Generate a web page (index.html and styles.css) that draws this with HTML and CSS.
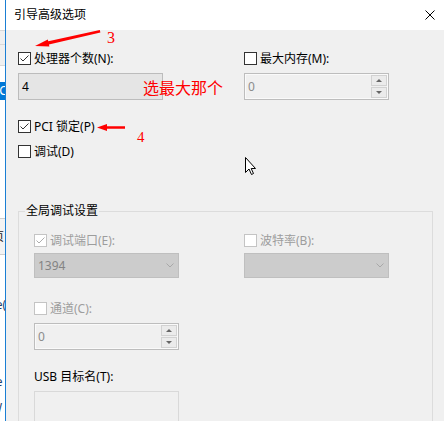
FILE: index.html
```html
<!DOCTYPE html>
<html lang="zh-CN">
<head>
<meta charset="utf-8">
<title>引导高级选项</title>
<link rel="stylesheet" href="styles.css">
</head>
<body>
<div class="screen">
  <div class="bgwin">
    <div class="seg h30"></div>
    <div class="seg line"></div>
    <div class="seg gray h13"></div>
    <div class="seg line"></div>
    <div class="seg gray h20"></div>
    <div class="seg line"></div>
    <div class="seg h16"></div>
    <div class="seg sel"><span class="frag">OC</span></div>
    <div class="seg h118"></div>
    <div class="seg box"><span class="frag dark">页</span></div>
    <div class="seg h37"></div>
    <div class="frow"><span class="frag">re(</span></div>
    <div class="frow"><span class="frag">N</span></div>
    <div class="frow"><span class="frag link">H</span></div>
    <div class="frow"><span class="frag">re</span></div>
    <div class="frow"><span class="frag">W</span></div>
  </div>

  <div class="dialog">
    <div class="titlebar">
      <span class="title">引导高级选项</span>
      <svg class="close" width="10" height="10" viewBox="0 0 10 10"><path d="M0.5 0.5 L9.5 9.5 M9.5 0.5 L0.5 9.5" stroke="#000" stroke-width="1" fill="none"/></svg>
    </div>

    <div class="content">
      <div class="two-col top">
        <div class="col">
          <div class="chk-row">
            <span class="cb"><svg width="11" height="11" viewBox="0 0 11 11"><path d="M1.5 5.5 L4 8 L9.5 2.5" stroke="#333" stroke-width="1" fill="none"/></svg></span>
            <span>处理器个数(N):</span>
          </div>
          <div class="field"><span>4</span></div>
        </div>
        <div class="col">
          <div class="chk-row">
            <span class="cb"></span>
            <span>最大内存(M):</span>
          </div>
          <div class="spinner">
            <span class="val">0</span>
            <span class="spin"><span class="sb up"><i></i></span><span class="sb down"><i></i></span></span>
          </div>
        </div>
      </div>

      <div class="chk-row pci">
        <span class="cb"><svg width="11" height="11" viewBox="0 0 11 11"><path d="M1.5 5.5 L4 8 L9.5 2.5" stroke="#333" stroke-width="1" fill="none"/></svg></span>
        <span>PCI 锁定(P)</span>
      </div>
      <div class="chk-row dbg">
        <span class="cb"></span>
        <span>调试(D)</span>
      </div>

      <div class="group">
        <div class="group-title">全局调试设置</div>
        <div class="two-col inner">
          <div class="col">
            <div class="chk-row disabled">
              <span class="cb"><svg width="11" height="11" viewBox="0 0 11 11"><path d="M1.5 5.5 L4 8 L9.5 2.5" stroke="#adadad" stroke-width="1" fill="none"/></svg></span>
              <span>调试端口(E):</span>
            </div>
            <div class="combo"><span>1394</span><svg width="8" height="5" viewBox="0 0 8 5"><path d="M0.5 0.5 L4 4 L7.5 0.5" stroke="#a8a8a8" stroke-width="1" fill="none"/></svg></div>
          </div>
          <div class="col">
            <div class="chk-row disabled">
              <span class="cb"></span>
              <span>波特率(B):</span>
            </div>
            <div class="combo"><span></span><svg width="8" height="5" viewBox="0 0 8 5"><path d="M0.5 0.5 L4 4 L7.5 0.5" stroke="#a8a8a8" stroke-width="1" fill="none"/></svg></div>
          </div>
        </div>

        <div class="col lower">
          <div class="chk-row disabled">
            <span class="cb"></span>
            <span>通道(C):</span>
          </div>
          <div class="spinner">
            <span class="val">0</span>
            <span class="spin"><span class="sb up"><i></i></span><span class="sb down"><i></i></span></span>
          </div>
          <div class="chk-row usb"><span>USB 目标名(T):</span></div>
          <div class="textbox"></div>
        </div>
      </div>
    </div>
  </div>

  <svg class="arrows" width="444" height="421" viewBox="0 0 444 421">
    <polygon points="35,46 47.8,39.4 48.3,41.3 99.8,30 100.4,32.4 48.9,44.4 49.4,46.6" fill="#f00"/>
    <polygon points="97,127.5 107,124 107,126.3 125,126.3 125,128.8 107,128.8 107,131" fill="#f00"/>
  </svg>
  <span class="note n3">3</span>
  <span class="note n4">4</span>
  <span class="note pick">选最大那个</span>
  <svg class="cursor" width="12" height="19" viewBox="0 0 12 19"><path d="M0.5 0.5 L0.5 15.5 L4 12 L6.5 17.5 L8.5 16.5 L6.2 11.5 L10.5 11.5 Z" fill="#fff" stroke="#000" stroke-width="1" stroke-linejoin="miter"/></svg>
</div>
</body>
</html>
```

FILE: styles.css
```css
* { box-sizing: border-box; }

html, body {
  margin: 0;
  width: 444px;
  height: 421px;
  overflow: hidden;
}

body {
  font-family: "Noto Sans", "Noto Sans CJK SC", sans-serif;
  font-size: 12px;
  color: #000;
  background: #f0f0f0;
}

.screen {
  position: relative;
  display: flex;
  width: 444px;
  height: 421px;
}

/* background window strip */
.bgwin {
  width: 5px;
  flex: none;
  display: flex;
  flex-direction: column;
  background: #fff;
  overflow: hidden;
}
.seg { flex: none; overflow: hidden; white-space: nowrap; }
.h30 { height: 30px; }
.h13 { height: 13px; }
.h20 { height: 20px; }
.h16 { height: 16px; }
.h118 { height: 118px; }
.h37 { height: 37px; }
.line { height: 1px; background: #d9d9d9; }
.gray { background: #f0f0f0; }
.sel {
  height: 18px;
  background: #0078d7;
  color: #fff;
  line-height: 18px;
}
.box {
  height: 37px;
  background: #f3f3f3;
  border-top: 1px solid #cfcfcf;
  border-bottom: 1px solid #cfcfcf;
  line-height: 35px;
}
.frow {
  height: 26px;
  line-height: 26px;
  overflow: hidden;
  white-space: nowrap;
}
.frag {
  display: inline-block;
  margin-left: -9px;
  font-size: 12px;
  color: #1c3f6e;
}
.frag.dark { color: #222; margin-left: -8px; }
.frag.link { color: #3a7bd5; }
.sel .frag { color: #fff; margin-left: -10px; }

/* dialog */
.dialog {
  flex: 1;
  display: flex;
  flex-direction: column;
  border-left: 1px solid #1a7fd4;
  background: #f0f0f0;
  overflow: hidden;
}

.titlebar {
  height: 30px;
  flex: none;
  background: #fff;
  display: flex;
  align-items: center;
  justify-content: space-between;
  padding: 0 9px 0 8px;
}
.title { font-size: 12px; line-height: 16px; }
.close { display: block; }

.content {
  flex: 1;
  padding: 20px 0 0 12px;
}

.two-col {
  display: grid;
  grid-template-columns: 145px 145px;
}
.two-col.top { column-gap: 81px; }
.two-col.inner { column-gap: 65px; margin-top: 13px; }

.col {
  display: flex;
  flex-direction: column;
  gap: 6px;
}
.inner .col { gap: 4px; }

.chk-row {
  display: flex;
  align-items: center;
  height: 17px;
  line-height: 17px;
  white-space: nowrap;
}
.cb {
  width: 13px;
  height: 13px;
  flex: none;
  margin-right: 3px;
  border: 1px solid #333;
  background: #fff;
  display: flex;
}
.cb svg { display: block; }
.disabled { color: #9d9d9d; }
.disabled .cb { border-color: #c4c4c4; background: #fff; }

.pci { margin-top: 18px; }
.dbg { margin-top: 8px; }

.field {
  height: 27px;
  border: 1px solid #bcbcbc;
  background: #e5e5e5;
  display: flex;
  align-items: center;
  padding-left: 3px;
}

.spinner {
  height: 27px;
  border: 1px solid #bdbdbd;
  background: #f0f0f0;
  box-shadow: inset 0 0 0 1px #fafafa;
  display: flex;
  align-items: stretch;
  color: #8c8c8c;
}
.spinner .val {
  flex: 1;
  display: flex;
  align-items: center;
  padding-left: 3px;
}
.spin {
  width: 16px;
  flex: none;
  margin: 1px 1px 1px 0;
  display: flex;
  flex-direction: column;
  gap: 1px;
}
.sb {
  height: 11px;
  border: 1px solid #d2d2d2;
  background: #ebebeb;
  display: flex;
  align-items: center;
  justify-content: center;
}
.sb i {
  width: 0;
  height: 0;
  border-left: 3px solid transparent;
  border-right: 3px solid transparent;
}
.up i { border-bottom: 3px solid #666; }
.down i { border-top: 3px solid #666; }

/* group box */
.group {
  margin-top: 51px;
  width: 415px;
  height: 240px;
  border: 1px solid #dcdcdc;
  border-bottom: none;
  padding-left: 15px;
}
.group-title {
  width: max-content;
  height: 16px;
  line-height: 16px;
  margin: -9px 0 0 -9px;
  padding: 0 1px;
  background: #f0f0f0;
}

.combo {
  height: 25px;
  border: 1px solid #bfbfbf;
  background: #cccccc;
  color: #838383;
  display: flex;
  align-items: center;
  justify-content: space-between;
  padding: 0 4px 0 3px;
}
.combo svg { display: block; }

.col.lower {
  width: 145px;
  margin-top: 22px;
}
.usb { margin-top: 12px; }
.textbox {
  height: 32px;
  border: 1px solid #d9d9d9;
  background: #f0f0f0;
}

/* annotations and pointer drawn over the dialog */
.arrows {
  position: absolute;
  left: 0;
  top: 0;
  pointer-events: none;
}
.note {
  position: absolute;
  color: #f00;
  white-space: nowrap;
}
.n3 {
  left: 107px;
  top: 30px;
  font-family: "Liberation Serif", serif;
  font-size: 16px;
  line-height: 16px;
}
.n4 {
  left: 137px;
  top: 130px;
  font-family: "Liberation Serif", serif;
  font-size: 15px;
  line-height: 15px;
}
.pick {
  left: 143px;
  top: 78px;
  font-family: "Noto Sans CJK SC", sans-serif;
  font-size: 16px;
  line-height: 19px;
}
.cursor {
  position: absolute;
  left: 245px;
  top: 157px;
}
```
